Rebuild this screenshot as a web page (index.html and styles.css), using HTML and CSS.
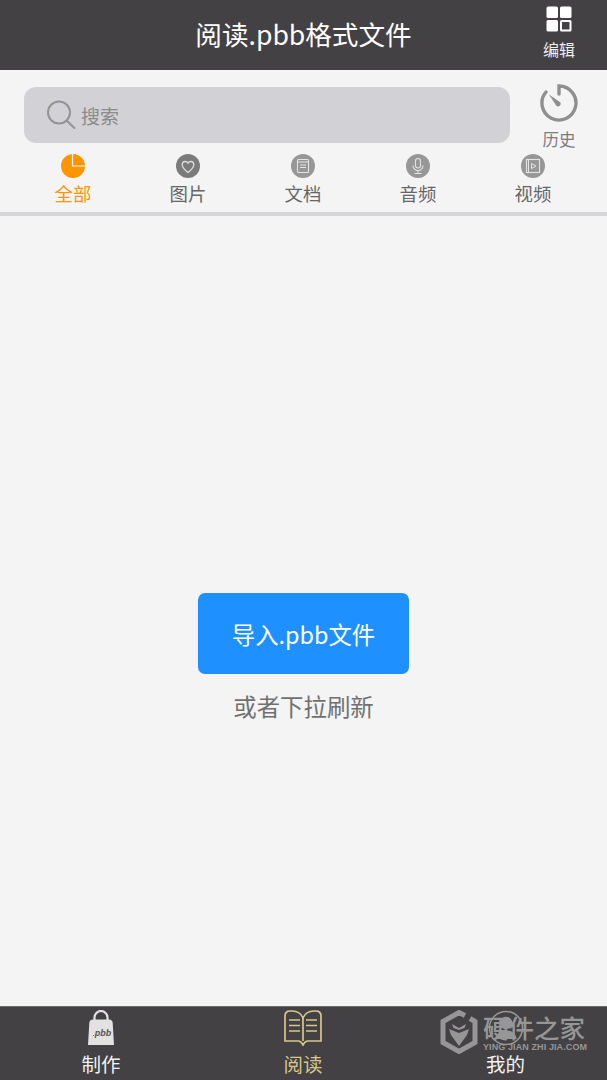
FILE: index.html
```html
<!DOCTYPE html>
<html lang="zh-CN">
<head>
    <meta charset="UTF-8">
    <meta name="viewport" content="width=device-width, initial-scale=1.0">
    <title>阅读.pbb格式文件</title>
    <link rel="stylesheet" href="styles.css">
</head>
<body>
    <div class="app">
        <!-- Top bar -->
        <header class="top-bar">
            <h1 class="top-title">阅读.pbb格式文件</h1>
            <div class="edit-btn">
                <svg width="26" height="26" viewBox="0 0 26 26">
                    <rect x="0.500" y="0.500" width="11.500" height="11.500" rx="1.500" fill="#fff"/>
                    <rect x="14" y="0.500" width="11.500" height="11.500" rx="1.500" fill="#fff"/>
                    <rect x="0.500" y="14" width="11.500" height="11.500" rx="1.500" fill="#fff"/>
                    <rect x="15" y="15" width="9.500" height="9.500" rx="0.500" fill="none" stroke="#fff" stroke-width="2"/>
                </svg>
                <span>编辑</span>
            </div>
        </header>

        <!-- Search -->
        <div class="search-row">
            <div class="search-box">
                <svg width="30" height="30" viewBox="0 0 30 30" fill="none" stroke="#939393" stroke-width="2">
                    <circle cx="13" cy="12.500" r="11"/>
                    <path d="M21 21l7.500 7" stroke-linecap="round"/>
                </svg>
                <span>搜索</span>
            </div>
            <div class="history-btn">
                <svg width="38" height="38" viewBox="0 0 38 38" fill="none">
                    <path d="M19 10V2A17 17 0 1 1 6 8" stroke="#8f8f8f" stroke-width="3.400" stroke-linecap="round"/>
                    <path d="M9 10.500L20.500 18.500a2.800 2.800 0 0 1-4 3.500z" fill="#8f8f8f"/>
                </svg>
                <span>历史</span>
            </div>
        </div>

        <!-- Categories -->
        <nav class="tabs">
            <div class="tab active">
                <svg class="tab-icon" viewBox="0 0 24 24">
                    <circle cx="12" cy="12" r="12" fill="#ff9500"/>
                    <path d="M11.500 0v12h12.500" fill="none" stroke="#f4f4f5" stroke-width="1.200"/>
                </svg>
                <span>全部</span>
            </div>
            <div class="tab">
                <svg class="tab-icon" viewBox="0 0 24 24">
                    <circle cx="12" cy="12" r="12" fill="#7b7b7b"/>
                    <path d="M12 18.500C8.500 15.800 6.200 13.600 6.200 10.800c0-2 1.500-3.300 3.100-3.300 1.200 0 2.100.6 2.700 1.600.6-1 1.500-1.600 2.700-1.600 1.600 0 3.100 1.300 3.100 3.300 0 2.800-2.300 5-5.800 7.700z" fill="none" stroke="#ddd" stroke-width="1.300"/>
                </svg>
                <span>图片</span>
            </div>
            <div class="tab">
                <svg class="tab-icon" viewBox="0 0 24 24">
                    <circle cx="12" cy="12" r="12" fill="#979797"/>
                    <rect x="6.500" y="5.500" width="11" height="13" rx="1" fill="none" stroke="#e4e4e4" stroke-width="1.100"/>
                    <path d="M6.500 8h11M9 11h6M9 13.500h6" stroke="#e4e4e4" stroke-width="1"/>
                </svg>
                <span>文档</span>
            </div>
            <div class="tab">
                <svg class="tab-icon" viewBox="0 0 24 24">
                    <circle cx="12" cy="12" r="12" fill="#979797"/>
                    <rect x="9.500" y="4.500" width="5" height="9.500" rx="2.500" fill="none" stroke="#e4e4e4" stroke-width="1.100"/>
                    <path d="M7 11.500a5 5 0 0 0 10 0M12 16.500v2.500M8.500 19.500h7" fill="none" stroke="#e4e4e4" stroke-width="1.100"/>
                </svg>
                <span>音频</span>
            </div>
            <div class="tab">
                <svg class="tab-icon" viewBox="0 0 24 24">
                    <circle cx="12" cy="12" r="12" fill="#979797"/>
                    <rect x="5.500" y="5.500" width="13" height="13" fill="none" stroke="#e4e4e4" stroke-width="1.100"/>
                    <path d="M7.500 6v12" stroke="#e4e4e4" stroke-width="1"/>
                    <path d="M10.500 9.500l4.500 2.500-4.500 2.500z" fill="none" stroke="#e4e4e4" stroke-width="1"/>
                </svg>
                <span>视频</span>
            </div>
        </nav>

        <!-- Empty state -->
        <main class="content">
            <button class="import-btn">导入.pbb文件</button>
            <p class="pull-hint">或者下拉刷新</p>
        </main>

        <!-- Bottom bar -->
        <footer class="bottom-bar">
            <div class="bottom-item">
                <svg width="26" height="36" viewBox="0 0 26 36">
                    <path d="M6.500 11V7.500a6.500 6.500 0 0 1 13 0V11" fill="none" stroke="#e2e2e2" stroke-width="2.200"/>
                    <path d="M5 9.500h16q3.500 0 3.700 3.500L26 35H0l1.300-22q.2-3.500 3.700-3.500z" fill="#e2e2e2"/>
                    <text x="15" y="26" class="pbb-mark">pbb</text>
                    <circle cx="5.500" cy="25.500" r="0.600" fill="#555"/>
                </svg>
                <span>制作</span>
            </div>
            <div class="bottom-item current">
                <svg width="38" height="36" viewBox="0 0 38 36" fill="none" stroke="#d9c68c" stroke-width="1.700">
                    <path d="M19 8C17 3 13 1 8 1H6C3 1 1 3 1 6V31H14C16 31 18 33 19 35 20 33 22 31 24 31H37V6C37 3 35 1 32 1H30C25 1 21 3 19 8z"/>
                    <path d="M19 8V31"/>
                    <path d="M5 10h11M5 15.500h11M5 21h11M22 10h11M22 15.500h11M22 21h11"/>
                </svg>
                <span>阅读</span>
            </div>
            <div class="bottom-item">
                <svg class="faint-icon" width="36" height="36" viewBox="0 0 36 36" fill="none" stroke="#ddd" stroke-width="1.500">
                    <circle cx="18" cy="18" r="16.500"/>
                    <circle cx="18" cy="13" r="5.500" fill="#ddd"/>
                    <path d="M8 29c1.500-6 6-8 10-8s8.500 2 10 8" fill="#ddd"/>
                </svg>
                <span>我的</span>
            </div>
            <!-- Site watermark sits over the bar -->
            <div class="watermark">
                <svg width="38" height="44" viewBox="0 0 38 44" fill="#969696">
                    <path d="M25 5.500L19 2.500 3 11.500v21L19 41.500l16-9v-21l-5-3" fill="none" stroke="#969696" stroke-width="5"/>
                    <path d="M9 19l10 4 10-4-2 6-8 11-8-11z"/>
                    <path d="M12 14l7 4 7-4-1.500 4-5.500 2-5.500-2z"/>
                </svg>
                <div class="watermark-text">
                    <div class="watermark-name">硬件之家</div>
                    <div class="watermark-url">YING JIAN ZHI JIA.COM</div>
                </div>
            </div>
        </footer>
    </div>
</body>
</html>
```

FILE: styles.css
```css
* {
    box-sizing: border-box;
}

body {
    margin: 0;
    background: #f4f4f5;
    font-family: "Noto Sans CJK SC", "Liberation Sans", sans-serif;
}

.app {
    display: flex;
    flex-direction: column;
    height: 1080px;
}

.top-bar {
    position: relative;
    height: 70px;
    flex-shrink: 0;
    display: flex;
    align-items: center;
    justify-content: center;
    background: #434144;
    color: #fff;
}

.top-title {
    margin: 0 0 3px;
    font-size: 26.6px;
    font-weight: 400;
    line-height: 36px;
}

.edit-btn {
    position: absolute;
    top: 6px;
    right: 32px;
    display: flex;
    flex-direction: column;
    align-items: center;
    font-size: 16px;
    line-height: 22px;
    gap: 6px;
    color: #eee;
}

.search-row {
    display: flex;
    padding: 17px 29px 0 24px;
    justify-content: space-between;
    height: 82px;
    flex-shrink: 0;
}

.search-box {
    width: 486px;
    height: 56px;
    padding-left: 22px;
    display: flex;
    align-items: center;
    gap: 5px;
    background: #d2d2d6;
    border-radius: 12px;
    color: #8b8b8b;
    font-size: 19px;
}

.history-btn {
    display: flex;
    flex-direction: column;
    align-items: center;
    margin-top: -3px;
    gap: 6px;
    font-size: 16.5px;
    line-height: 22px;
    color: #7c7c7c;
}

.tabs {
    display: grid;
    grid-template-columns: repeat(5, 115px);
    padding: 2px 0 0 15.500px;
    height: 64px;
    flex-shrink: 0;
    border-bottom: 4px solid #d6d6d8;
}

.tab {
    display: flex;
    flex-direction: column;
    align-items: center;
    font-size: 18.4px;
    line-height: 24px;
    color: #666;
}

.tab-icon {
    width: 24px;
    height: 24px;
    margin-bottom: 3px;
}

.tab.active {
    color: #ff9500;
}

.content {
    flex: 1;
    display: flex;
    flex-direction: column;
    align-items: center;
    padding-top: 377px;
}

.import-btn {
    width: 211px;
    height: 81px;
    padding: 0;
    border: none;
    border-radius: 7px;
    background: #1e90ff;
    color: #fff;
    font-family: inherit;
    font-size: 23.4px;
}

.pull-hint {
    margin: 15px 0 0;
    font-size: 23.4px;
    line-height: 34px;
    color: #707070;
}

.bottom-bar {
    position: relative;
    height: 74px;
    flex-shrink: 0;
    display: grid;
    grid-template-columns: 202px 202px 203px;
    background: #434144;
    color: #f2f2f2;
    border-top: 1px solid #6d6b6e;
}

.bottom-item {
    display: flex;
    flex-direction: column;
    align-items: center;
    padding-top: 3px;
    font-size: 19.5px;
    line-height: 26px;
    gap: 5px;
}

.bottom-item.current {
    color: #d9c68c;
}

.faint-icon {
    opacity: 0.55;
}

.pbb-mark {
    font-family: "Liberation Sans", sans-serif;
    font-size: 9px;
    font-weight: 700;
    font-style: italic;
    fill: #555;
    text-anchor: middle;
}

.watermark {
    position: absolute;
    top: 3px;
    left: 440px;
    display: flex;
    align-items: flex-start;
    gap: 5px;
    color: #969696;
}

.watermark-name {
    font-size: 25.5px;
    line-height: 28px;
    font-weight: 500;
    margin-top: 3px;
}

.watermark-url {
    font-family: "Liberation Sans", sans-serif;
    font-size: 9px;
    line-height: 10px;
    font-weight: 700;
    white-space: nowrap;
    letter-spacing: 0.1px;
    margin-top: 1px;
}
```
